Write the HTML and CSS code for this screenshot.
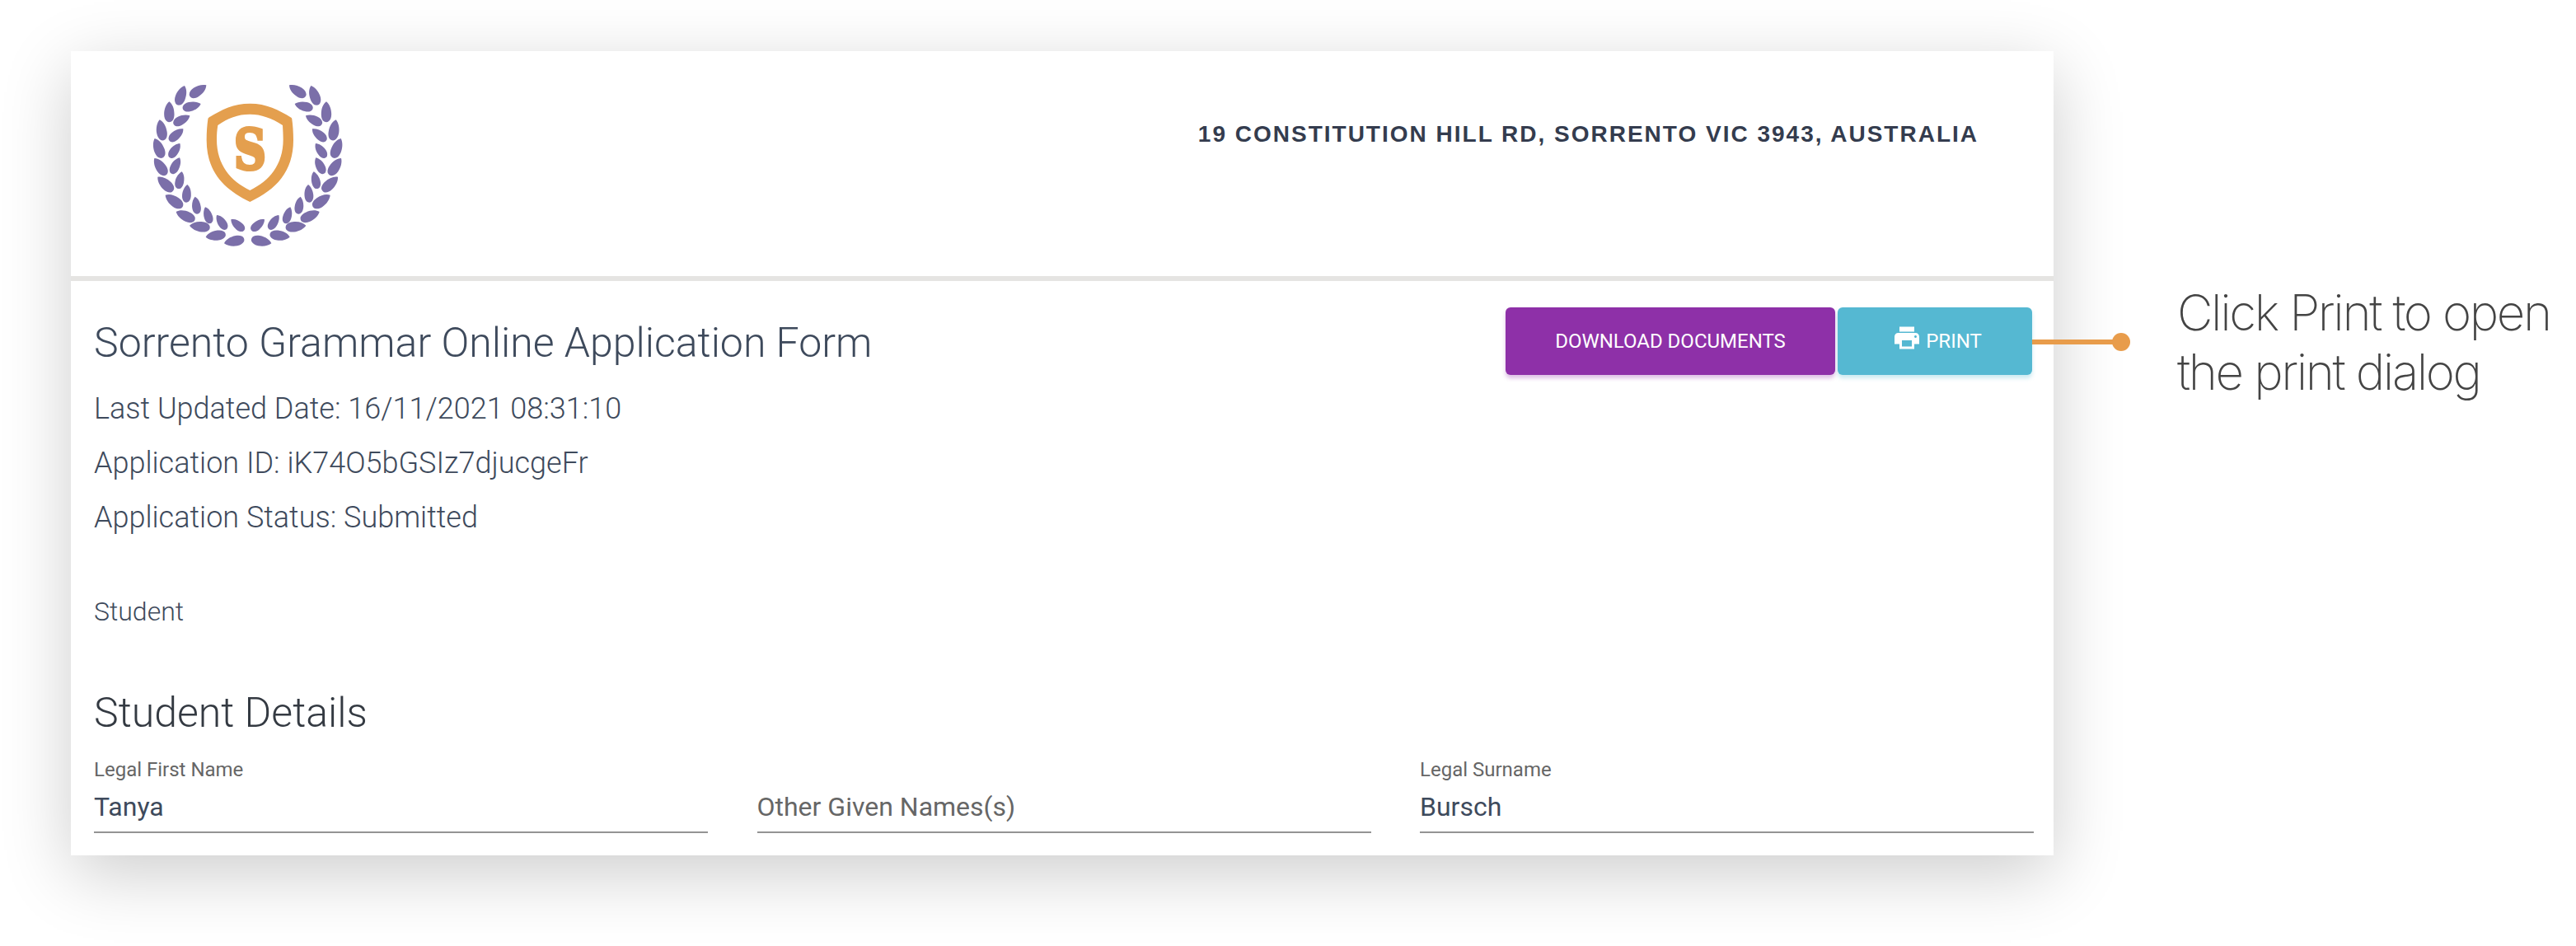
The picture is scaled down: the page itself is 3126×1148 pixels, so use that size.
FILE: index.html
```html
<!DOCTYPE html>
<html lang="en">
<head>
<meta charset="UTF-8">
<meta name="viewport" content="width=device-width, initial-scale=1.0">
<title>Sorrento Grammar Online Application Form</title>
<link rel="stylesheet" href="styles.css">
</head>
<body>

<div class="page">
  <div class="card">
    <header class="header">
      <svg class="logo" viewBox="0 0 840 720" role="img" aria-label="Sorrento Grammar">
        <defs>
          <path id="leaf" d="M0 0C12 9 18 25 18 45C18 60 12 69 6 71C2 73 -4 73 -8 70C-15 64 -18 56 -18 44C-18 27 -11 9 0 0Z"/>
          <g id="branch">
            <!-- outer leaves -->
            <use href="#leaf" transform="translate(192 72) rotate(20) scale(1.03)"/>
            <use href="#leaf" transform="translate(136 130) scale(1.03)"/>
            <use href="#leaf" transform="translate(101 196) rotate(-10) scale(1.05)"/>
            <use href="#leaf" transform="translate(83 264) rotate(-22) scale(1.05)"/>
            <use href="#leaf" transform="translate(82 336) rotate(-35) scale(1.03)"/>
            <use href="#leaf" transform="translate(94 404) rotate(-47) scale(1.05)"/>
            <use href="#leaf" transform="translate(122 470) rotate(-55) scale(1.05)"/>
            <use href="#leaf" transform="translate(161 531) rotate(-66) scale(1.03)"/>
            <use href="#leaf" transform="translate(210 581) rotate(-84) scale(1.03)"/>
            <use href="#leaf" transform="translate(269 623) rotate(-98) scale(1.01)"/>
            <use href="#leaf" transform="translate(336 646) rotate(-102) scale(1.03)"/>
            <!-- inner leaves -->
            <use href="#leaf" transform="translate(271 70) rotate(55) scale(1)"/>
            <use href="#leaf" transform="translate(251 138) rotate(75) scale(.94)"/>
            <use href="#leaf" transform="translate(211 181) rotate(62) scale(.92)"/>
            <use href="#leaf" transform="translate(187 229) rotate(49) scale(.92)"/>
            <use href="#leaf" transform="translate(175 282) rotate(36) scale(.88)"/>
            <use href="#leaf" transform="translate(174 334) rotate(27) scale(.9)"/>
            <use href="#leaf" transform="translate(182 385) rotate(13) scale(.88)"/>
            <use href="#leaf" transform="translate(202 432) rotate(4) scale(.9)"/>
            <use href="#leaf" transform="translate(230 476) rotate(-8) scale(.88)"/>
            <use href="#leaf" transform="translate(267 514) rotate(-18) scale(.86)"/>
            <use href="#leaf" transform="translate(309 543) rotate(-34) scale(.86)"/>
            <use href="#leaf" transform="translate(361 559) rotate(-50) scale(.86)"/>
          </g>
        </defs>
        <g class="wreath">
          <use href="#branch"/>
          <use href="#branch" transform="translate(844 0) scale(-1 1)"/>
        </g>
        <path class="shield" fill-rule="evenodd" d="M430 137C490 137 535 160 580 188Q583 190 583 194C586 215 588 240 588 270C588 385 525 450 430 495C335 450 272 385 272 270C272 240 274 215 277 194Q277 190 280 188C325 160 370 137 430 137ZM430 176C470 176 510 190 549 216C550 235 551 250 551 268C551 360 500 420 430 453C360 420 309 360 309 268C309 250 310 235 313 216C350 190 385 176 430 176Z"/>
        <text class="shield-letter" transform="translate(430 376) scale(.8 1)" text-anchor="middle">S</text>
      </svg>
      <p class="address">19 CONSTITUTION HILL RD, SORRENTO VIC 3943, AUSTRALIA</p>
    </header>

    <main class="content">
      <div class="top-row">
        <div class="summary">
          <h1>Sorrento Grammar Online Application Form</h1>
          <p>Last Updated Date: 16/11/2021 08:31:10</p>
          <p>Application ID: iK74O5bGSIz7djucgeFr</p>
          <p>Application Status: Submitted</p>
        </div>
        <div class="actions">
          <button class="btn btn-download">DOWNLOAD DOCUMENTS</button>
          <button class="btn btn-print">
            <svg class="print-icon" viewBox="0 0 24 24"><path d="M19 8H5c-1.66 0-3 1.34-3 3v6h4v4h12v-4h4v-6c0-1.66-1.34-3-3-3zm-3 11H8v-5h8v5zm3-7c-.55 0-1-.45-1-1s.45-1 1-1 1 .45 1 1-.45 1-1 1zm-1-9H6v4h12V3z"/></svg>
            PRINT
          </button>
          <div class="pointer"></div>
        </div>
      </div>

      <p class="section-name">Student</p>
      <h2>Student Details</h2>

      <div class="fields">
        <div class="field">
          <div class="label">Legal First Name</div>
          <div class="value">Tanya</div>
        </div>
        <div class="field">
          <div class="label"></div>
          <div class="value placeholder">Other Given Names(s)</div>
        </div>
        <div class="field">
          <div class="label">Legal Surname</div>
          <div class="value">Bursch</div>
        </div>
      </div>
    </main>
  </div>

  <p class="note">Click Print to open<br>the print dialog</p>
</div>

</body>
</html>
```
FILE: styles.css
```css
* {
  box-sizing: border-box;
}
body {
  margin: 0;
  background: #fff;
  font-family: Roboto, "Liberation Sans", sans-serif;
  color: #3e4a5c;
}
h1, h2, p {
  margin: 0;
  font-weight: 300;
}
.page {
  display: flex;
  align-items: flex-start;
  height: 1148px;
  padding: 62px 0 0 86px;
  overflow: hidden;
}
.card {
  flex: none;
  width: 2406px;
  height: 976px;
  background: #fff;
  box-shadow: 0 22px 80px rgba(0, 0, 0, 0.2);
}

/* header */
.header {
  display: flex;
  justify-content: space-between;
  height: 279px;
  padding: 18px 91px 0 74px;
  border-bottom: 6px solid #e5e4e2;
}
.logo {
  width: 280px;
  height: 240px;
}
.wreath {
  fill: #7b6fa9;
}
.shield, .shield-letter {
  fill: #e49f4e;
}
.shield-letter {
  font-family: "DejaVu Serif", serif;
  font-weight: bold;
  font-size: 202px;
  stroke: #e49f4e;
  stroke-width: 12px;
}
.address {
  padding-top: 67px;
  font-family: "Liberation Sans", Arial, sans-serif;
  font-size: 28px;
  font-weight: bold;
  line-height: 32px;
  letter-spacing: 2px;
  color: #343c4e;
}

/* application summary */
.content {
  padding: 32px 24px 0 28px;
}
.top-row {
  display: flex;
  justify-content: space-between;
  align-items: flex-start;
}
.summary {
  padding-top: 10px;
}
h1, h2 {
  font-size: 50px;
  line-height: 66px;
}
h1 {
  margin-bottom: 14px;
}
.summary p {
  font-size: 36px;
  line-height: 66px;
}
.actions {
  position: relative;
  display: flex;
  gap: 3px;
  margin-right: 2px;
}
.btn {
  display: flex;
  justify-content: center;
  align-items: center;
  height: 82px;
  padding: 0;
  border: none;
  border-radius: 6px;
  font-family: inherit;
  font-size: 24px;
  color: #fff;
  cursor: pointer;
}
.btn-download {
  width: 400px;
  background: #8e30a8;
  box-shadow: 0 4px 5px rgba(142, 48, 168, 0.3);
}
.btn-print {
  width: 236px;
  padding-left: 5px;
  background: #55b8d2;
  box-shadow: 0 4px 5px rgba(85, 184, 210, 0.3);
}
.print-icon {
  width: 36px;
  height: 36px;
  margin: -9px 5px 0 0;
  fill: currentColor;
}

/* line from the print button out to the note */
.pointer {
  position: absolute;
  left: 100%;
  top: 39px;
  width: 108px;
  height: 6px;
  background: #e89c4b;
}
.pointer::after {
  content: "";
  position: absolute;
  right: -11px;
  top: -8px;
  width: 22px;
  height: 22px;
  border-radius: 50%;
  background: #e89c4b;
}

/* student details */
.section-name {
  margin-top: 57px;
  font-size: 32px;
  line-height: 48px;
}
h2 {
  margin: 66px 0 20px;
  color: #343a42;
}
.fields {
  display: grid;
  grid-template-columns: repeat(3, 745px);
  justify-content: space-between;
}
.field {
  border-bottom: 2px solid #949494;
  padding-bottom: 6px;
}
.label {
  height: 32px;
  margin-bottom: 5px;
  font-size: 24px;
  line-height: 32px;
  color: #666;
}
.value {
  font-size: 32px;
  line-height: 48px;
}
.placeholder {
  color: #666;
}

.note {
  flex: none;
  margin: 281px 0 0 150px;
  font-family: Inter, "Liberation Sans", sans-serif;
  font-size: 60px;
  font-weight: 200;
  line-height: 72px;
  letter-spacing: -2.4px;
  white-space: nowrap;
  color: #444;
}
```
